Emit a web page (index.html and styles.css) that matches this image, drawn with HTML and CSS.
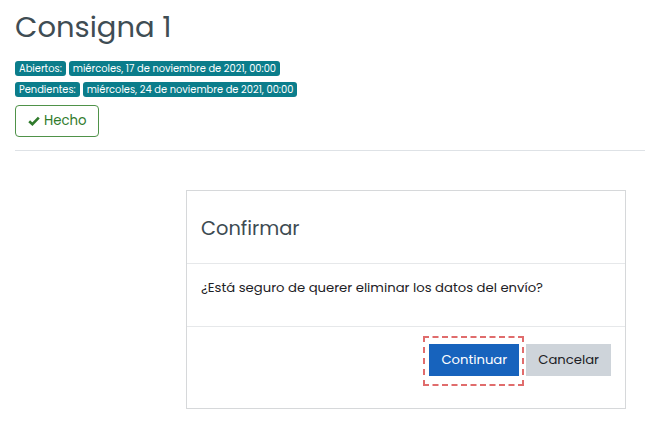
FILE: index.html
```html
<!DOCTYPE html>
<html lang="es">
<head>
<meta charset="utf-8">
<title>Consigna 1</title>
<link rel="stylesheet" href="styles.css">
</head>
<body>
<div class="page">
  <h1 class="title">Consigna 1</h1>
  <div class="dates">
    <div class="date-row">
      <span class="badge">Abiertos:</span>
      <span class="badge">miércoles, 17 de noviembre de 2021, 00:00</span>
    </div>
    <div class="date-row">
      <span class="badge">Pendientes:</span>
      <span class="badge">miércoles, 24 de noviembre de 2021, 00:00</span>
    </div>
  </div>
  <button class="btn-done" type="button">
    <svg class="check" viewBox="0 0 12 10" width="12" height="10" aria-hidden="true">
      <path d="M1.2 5.2 L4.4 8.2 L10.8 1.6" fill="none" stroke="currentColor" stroke-width="2.6" stroke-linecap="butt" stroke-linejoin="miter"/>
    </svg>
    <span>Hecho</span>
  </button>
  <hr class="divider">
  <div class="dialog">
    <div class="dialog-header"><h2 class="dialog-title">Confirmar</h2></div>
    <div class="dialog-body"><p class="dialog-text">¿Está seguro de querer eliminar los datos del envío?</p></div>
    <div class="dialog-footer">
      <button class="btn btn-primary focused" type="button">Continuar</button>
      <button class="btn btn-secondary" type="button">Cancelar</button>
    </div>
  </div>
</div>
</body>
</html>
```
FILE: styles.css
```css
* { box-sizing: border-box; }
html, body { margin: 0; padding: 0; background: #fff; }
body {
  font-family: "Poppins", "Inter", "Open Sans", sans-serif;
  color: #1d2125;
}
.page { padding: 0 0 0 15px; }
.title {
  margin: 0;
  padding-top: 9px;
  font-size: 29px;
  line-height: 36px;
  font-weight: 400;
  color: #3f4d54;
}
.dates { margin-top: 16px; }
.date-row {
  display: flex;
  gap: 3px;
  margin-bottom: 6px;
}
.badge {
  display: inline-block;
  height: 15px;
  font-size: 9.9px;
  line-height: 15px;
  padding: 0 4px;
  border-radius: 3px;
  background: #0b7d8b;
  color: #fff;
  white-space: nowrap;
}
.btn-done {
  margin-top: 2px;
  height: 32px;
  padding: 0 11px 0 12px;
  display: inline-flex;
  align-items: center;
  gap: 4px;
  background: #fff;
  border: 1px solid #4f9249;
  border-radius: 4px;
  color: #2f7a2b;
  font-family: inherit;
  font-size: 13.3px;
}
.check { display: block; }
.divider {
  margin: 13px 0 0 0;
  border: 0;
  border-top: 1px solid #dee2e6;
  height: 0;
}
.dialog {
  margin: 39px 0 0 171px;
  width: 440px;
  border: 1px solid #d6d8da;
  background: #fff;
}
.dialog-header {
  height: 73px;
  display: flex;
  align-items: center;
  padding: 3px 14px 0;
  border-bottom: 1px solid #e6e8ea;
}
.dialog-title {
  margin: 0;
  font-size: 19.4px;
  font-weight: 400;
  color: #3d4b52;
}
.dialog-body {
  padding: 13px 14px 0;
  height: 63px;
  border-bottom: 1px solid #e6e8ea;
}
.dialog-text {
  margin: 0;
  font-size: 13.2px;
  line-height: 21px;
  color: #1d2125;
}
.dialog-footer {
  display: flex;
  justify-content: flex-end;
  gap: 7px;
  padding: 17px 14px 32px;
}
.btn {
  height: 32px;
  padding: 0 12px;
  border: 0;
  border-radius: 0;
  font-family: inherit;
  font-size: 13.2px;
}
.btn-primary { background: #1763bd; color: #fff; }
.btn-secondary { background: #ced4da; color: #1d2125; }
.focused { position: relative; }
.focused::after {
  content: "";
  position: absolute;
  top: -8px;
  bottom: -10px;
  left: -6px;
  right: -5px;
  border: 2px dashed #e06c6c;
  pointer-events: none;
}
```
